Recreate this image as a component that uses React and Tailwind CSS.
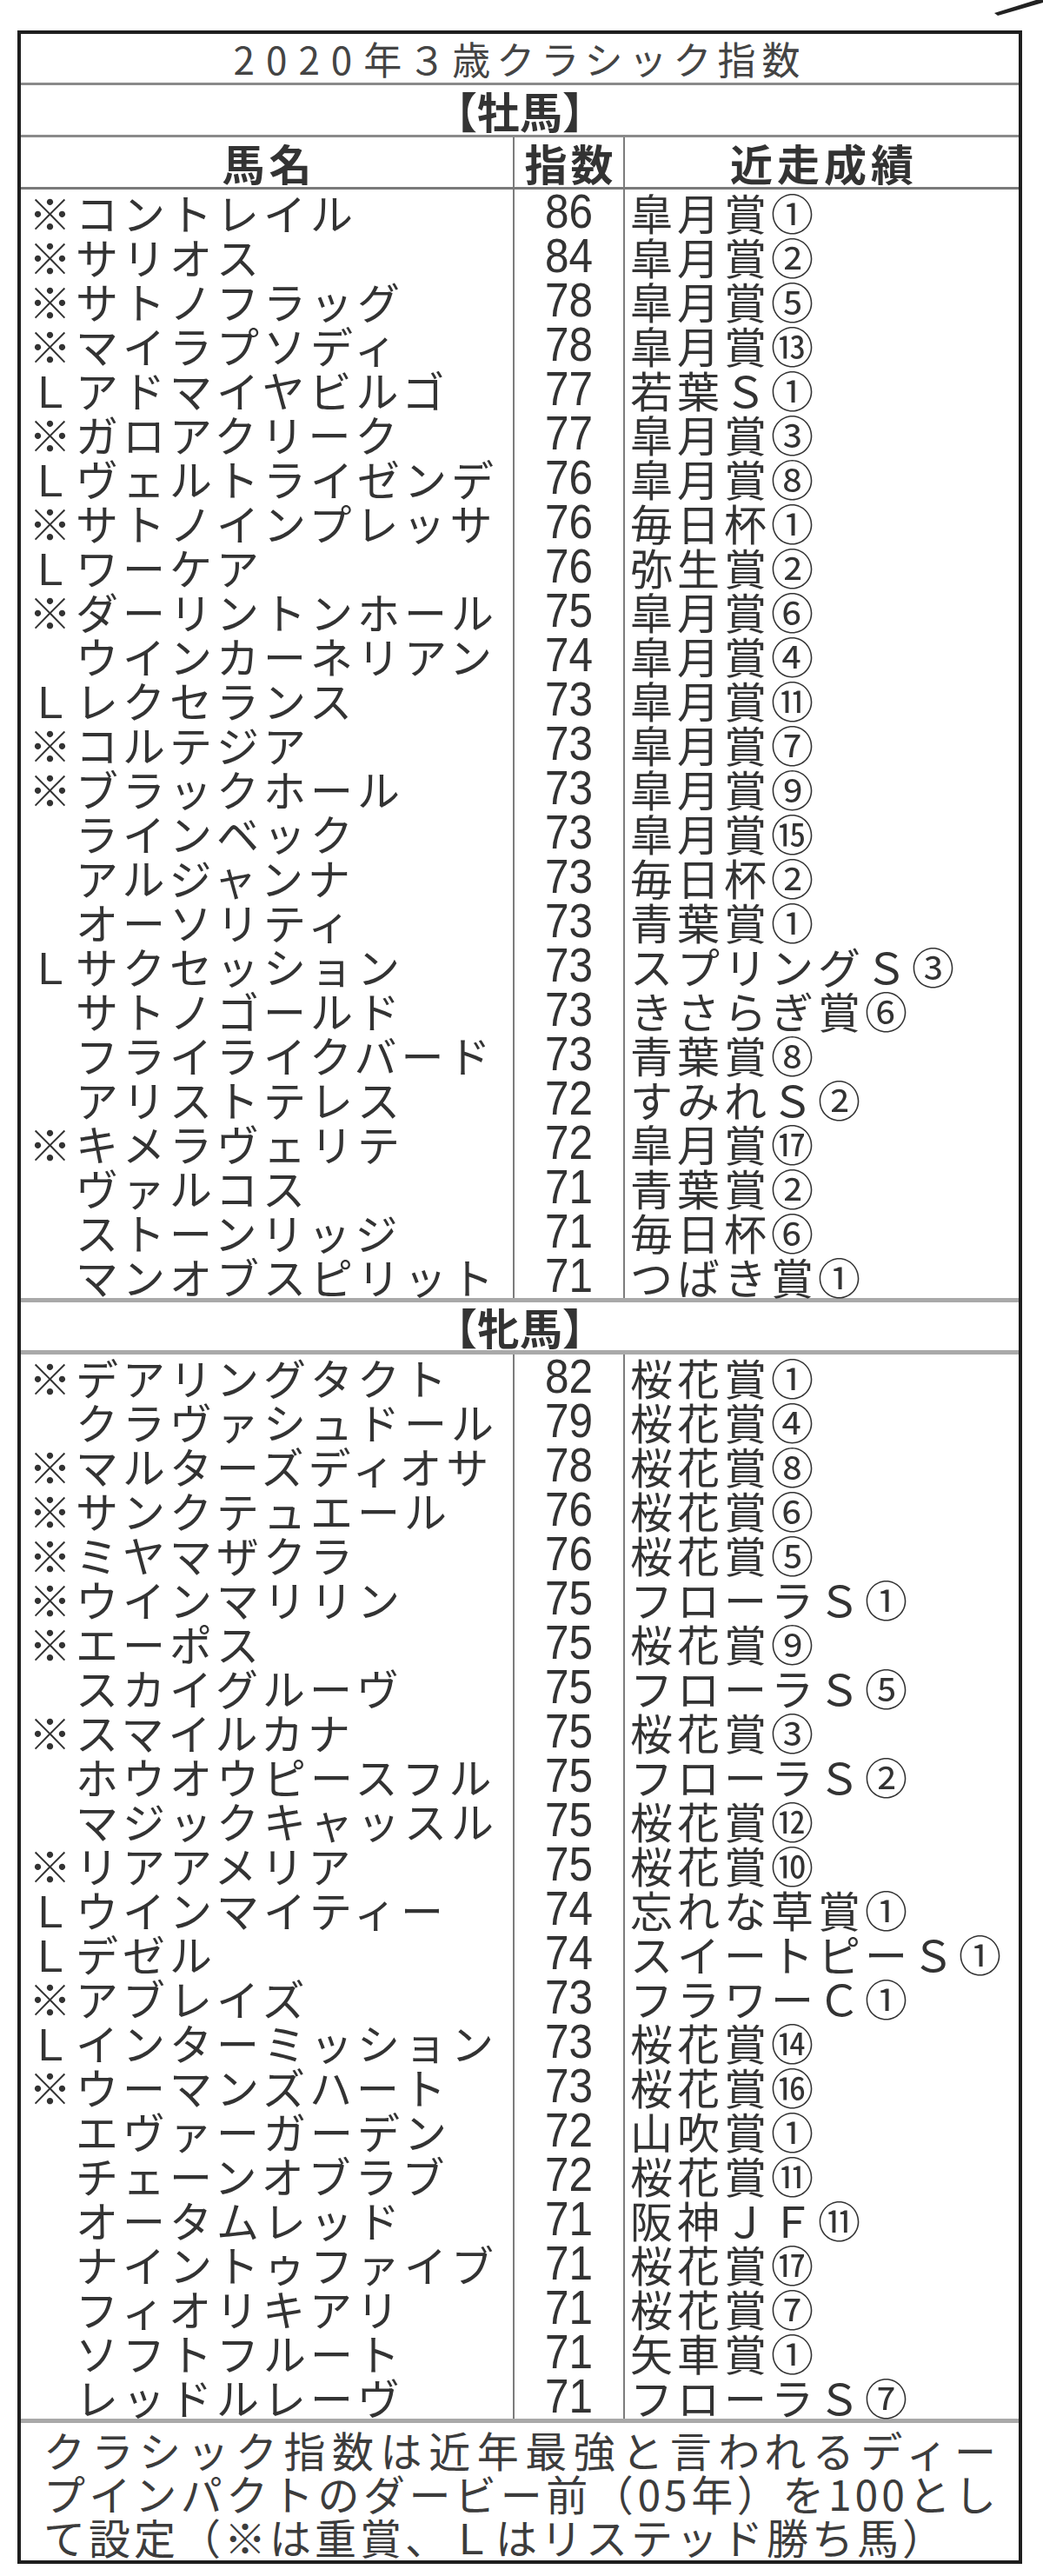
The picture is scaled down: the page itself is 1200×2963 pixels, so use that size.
import React from "react";

const colts = [
  ["※", "コントレイル", "86", "皐月賞①"],
  ["※", "サリオス", "84", "皐月賞②"],
  ["※", "サトノフラッグ", "78", "皐月賞⑤"],
  ["※", "マイラプソディ", "78", "皐月賞⑬"],
  ["Ｌ", "アドマイヤビルゴ", "77", "若葉Ｓ①"],
  ["※", "ガロアクリーク", "77", "皐月賞③"],
  ["Ｌ", "ヴェルトライゼンデ", "76", "皐月賞⑧"],
  ["※", "サトノインプレッサ", "76", "毎日杯①"],
  ["Ｌ", "ワーケア", "76", "弥生賞②"],
  ["※", "ダーリントンホール", "75", "皐月賞⑥"],
  ["　", "ウインカーネリアン", "74", "皐月賞④"],
  ["Ｌ", "レクセランス", "73", "皐月賞⑪"],
  ["※", "コルテジア", "73", "皐月賞⑦"],
  ["※", "ブラックホール", "73", "皐月賞⑨"],
  ["　", "ラインベック", "73", "皐月賞⑮"],
  ["　", "アルジャンナ", "73", "毎日杯②"],
  ["　", "オーソリティ", "73", "青葉賞①"],
  ["Ｌ", "サクセッション", "73", "スプリングＳ③"],
  ["　", "サトノゴールド", "73", "きさらぎ賞⑥"],
  ["　", "フライライクバード", "73", "青葉賞⑧"],
  ["　", "アリストテレス", "72", "すみれＳ②"],
  ["※", "キメラヴェリテ", "72", "皐月賞⑰"],
  ["　", "ヴァルコス", "71", "青葉賞②"],
  ["　", "ストーンリッジ", "71", "毎日杯⑥"],
  ["　", "マンオブスピリット", "71", "つばき賞①"],
];

const fillies = [
  ["※", "デアリングタクト", "82", "桜花賞①"],
  ["　", "クラヴァシュドール", "79", "桜花賞④"],
  ["※", "マルターズディオサ", "78", "桜花賞⑧"],
  ["※", "サンクテュエール", "76", "桜花賞⑥"],
  ["※", "ミヤマザクラ", "76", "桜花賞⑤"],
  ["※", "ウインマリリン", "75", "フローラＳ①"],
  ["※", "エーポス", "75", "桜花賞⑨"],
  ["　", "スカイグルーヴ", "75", "フローラＳ⑤"],
  ["※", "スマイルカナ", "75", "桜花賞③"],
  ["　", "ホウオウピースフル", "75", "フローラＳ②"],
  ["　", "マジックキャッスル", "75", "桜花賞⑫"],
  ["※", "リアアメリア", "75", "桜花賞⑩"],
  ["Ｌ", "ウインマイティー", "74", "忘れな草賞①"],
  ["Ｌ", "デゼル", "74", "スイートピーＳ①"],
  ["※", "アブレイズ", "73", "フラワーＣ①"],
  ["Ｌ", "インターミッション", "73", "桜花賞⑭"],
  ["※", "ウーマンズハート", "73", "桜花賞⑯"],
  ["　", "エヴァーガーデン", "72", "山吹賞①"],
  ["　", "チェーンオブラブ", "72", "桜花賞⑪"],
  ["　", "オータムレッド", "71", "阪神ＪＦ⑪"],
  ["　", "ナイントゥファイブ", "71", "桜花賞⑰"],
  ["　", "フィオリキアリ", "71", "桜花賞⑦"],
  ["　", "ソフトフルート", "71", "矢車賞①"],
  ["　", "レッドルレーヴ", "71", "フローラＳ⑦"],
];

const Row = ({ mark, name, idx, result }) => (
  <div className="flex h-[51px] leading-[51px]">
    <div className="w-[568px] border-r-2 border-[#7c7c7c] pl-[9px] tracking-[5px] whitespace-nowrap">
      {mark}
      {name}
    </div>
    <div className="w-[127px] border-r-2 border-[#7c7c7c] text-center font-['Liberation_Sans',sans-serif] text-[55px]">
      <span className="inline-block scale-x-90">{idx}</span>
    </div>
    <div className="flex-1 pl-[6px] tracking-[5px] whitespace-nowrap">{result}</div>
  </div>
);

const Line = ({ h = "h-[3px]", c = "bg-[#8a8a8a]" }) => <div className={`${h} ${c}`} />;

export default function App() {
  return (
    <div className="relative w-[1200px] h-[2963px] bg-white pt-[35px] pl-[20px] font-['Noto_Sans_CJK_JP','Noto_Sans',sans-serif] text-[49px] text-[#333]">
      {/* fragment of the neighbouring picture */}
      <svg className="absolute top-0 left-0" width="1200" height="20" viewBox="0 0 1200 20">
        <polygon points="1144,15 1192,0 1200,0 1200,3 1148,18" fill="#222" />
      </svg>

      <div className="w-[1156px] border-4 border-[#1e1e1e]">
        <div className="h-[56px] leading-[56px] text-center text-[44px] tracking-[7px] text-[#444]">
          <span className="tracking-[13px]">2020</span>年３歳クラシック指数
        </div>
        <Line />
        <div className="h-[57px] leading-[57px] text-center font-bold">【牡馬】</div>
        <Line />
        <div className="flex h-[57px] leading-[57px] font-bold">
          <div className="w-[568px] border-r-2 border-[#7c7c7c] text-center tracking-[5px] pl-[5px]">馬名</div>
          <div className="w-[127px] border-r-2 border-[#7c7c7c] text-center tracking-[4px] pl-[4px]">指数</div>
          <div className="flex-1 text-center tracking-[5px] pl-[5px]">近走成績</div>
        </div>
        <Line c="bg-[#7a7a7a]" />
        {colts.map((r, i) => (
          <Row key={i} mark={r[0]} name={r[1]} idx={r[2]} result={r[3]} />
        ))}
        <Line h="h-[5px]" c="bg-[#a9a9a9]" />
        <div className="h-[55px] leading-[55px] text-center font-bold">【牝馬】</div>
        <Line h="h-[5px]" c="bg-[#a9a9a9]" />
        {fillies.map((r, i) => (
          <Row key={i} mark={r[0]} name={r[1]} idx={r[2]} result={r[3]} />
        ))}
        <Line h="h-[5px]" c="bg-[#a9a9a9]" />
        <div className="pt-[5px] pb-[3px] pl-[26px] pr-[22px] text-[48px] leading-[50px] tracking-[4px] whitespace-nowrap text-[#3c3c3c]">
          <div className="text-justify [text-align-last:justify]">クラシック指数は近年最強と言われるディー</div>
          <div className="text-justify [text-align-last:justify]">プインパクトのダービー前（05年）を100とし</div>
          <div>て設定（※は重賞、Ｌはリステッド勝ち馬）</div>
        </div>
      </div>
    </div>
  );
}
